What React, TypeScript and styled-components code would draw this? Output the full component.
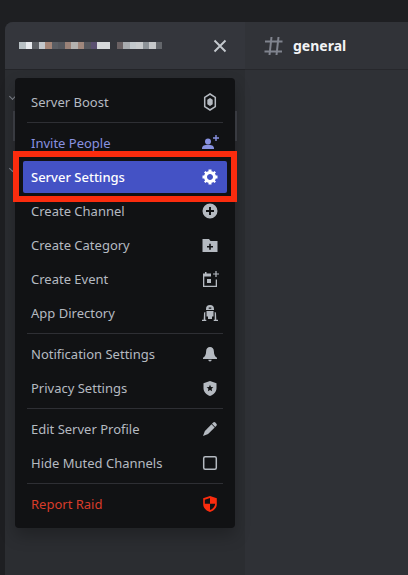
import React from "react"
import styled, { createGlobalStyle } from "styled-components"

const GlobalStyle = createGlobalStyle`
    html, body {
        margin: 0;
        padding: 0;
        height: 100%;
        background: #1e1f22;
    }
    body {
        font-family: "Noto Sans", "Liberation Sans", sans-serif;
    }
`

const BoostIcon = () => (
    <svg width="18" height="18" viewBox="0 0 18 18" fill="none">
        <path d="M9 1 14.300 4.300v9.400L9 17 3.700 13.700V4.300Z" stroke="currentColor" strokeWidth="1.500" />
        <path d="M9 5 11.700 6.800v4.400L9 13 6.300 11.200V6.800Z" fill="currentColor" />
    </svg>
)

const InviteIcon = () => (
    <svg width="18" height="18" viewBox="0 0 18 18" fill="currentColor">
        <circle cx="7" cy="7.500" r="3" />
        <path d="M1 14.500c0-2.800 2.700-3.800 6-3.800s6 1 6 3.800v.5H1Z" />
        <path d="M14.300 1h1.400v2.300H18v1.400h-2.300V7h-1.400V4.700H12V3.300h2.300Z" />
    </svg>
)

const GearIcon = () => (
    <svg width="18" height="18" viewBox="0 0 24 24" fill="currentColor">
        <path fillRule="evenodd" d="M19.738 10H22V14H19.739C19.498 14.931 19.1 15.798 18.565 16.564L20 18L18 20L16.565 18.564C15.797 19.099 14.932 19.498 14 19.738V22H10V19.738C9.069 19.498 8.203 19.099 7.436 18.564L6 20L4 18L5.436 16.564C4.901 15.799 4.502 14.932 4.262 14H2V10H4.262C4.502 9.068 4.9 8.202 5.436 7.436L4 6L6 4L7.436 5.436C8.202 4.9 9.068 4.502 10 4.262V2H14V4.261C14.932 4.502 15.797 4.9 16.565 5.435L18 3.999L20 5.999L18.564 7.436C19.099 8.202 19.498 9.069 19.738 10ZM12 16C14.2091 16 16 14.2091 16 12C16 9.79086 14.2091 8 12 8C9.79086 8 8 9.79086 8 12C8 14.2091 9.79086 16 12 16Z" />
    </svg>
)

const CirclePlusIcon = () => (
    <svg width="18" height="18" viewBox="0 0 18 18" fill="currentColor">
        <path fillRule="evenodd" d="M9 1.500a7.500 7.500 0 1 0 0 15 7.500 7.500 0 0 0 0-15ZM8 5h2v3h3v2h-3v3H8v-3H5V8h3Z" />
    </svg>
)

const FolderPlusIcon = () => (
    <svg width="18" height="18" viewBox="0 0 18 18" fill="currentColor">
        <path fillRule="evenodd" d="M1.500 3h6.500l1.500 2h7v11h-15ZM8.200 7.700v2.300H6v1.500h2.200v2.200h1.600v-2.200H12V10H9.800V7.700Z" />
    </svg>
)

const EventIcon = () => (
    <svg width="18" height="18" viewBox="0 0 18 18" fill="none">
        <path d="M2 3.500h2V2h1.500v1.500H10v3H3.300v9.200h11.400V9.500H16V17H2Z" fill="currentColor" />
        <rect x="6" y="9" width="4" height="4" fill="currentColor" />
        <path d="M14.400 1h1.200v2.400H18v1.200h-2.400V7h-1.200V4.600H12V3.400h2.400Z" fill="currentColor" />
    </svg>
)

const RobotIcon = () => (
    <svg width="18" height="18" viewBox="0 0 18 18" fill="currentColor">
        <path fillRule="evenodd" d="M9 1a4 4 0 0 1 4 4v1H5V5a4 4 0 0 1 4-4Zm-1.300 2.500v1.300h2.600V3.500Z" />
        <path d="M5.500 7h7v5.500h-1.500V15H7v-2.500H5.500Z" />
        <path d="M4.300 8v7.800h1V17H1v-1.200h1.700l.3-6.300C3 8.700 3.500 8 4.300 8ZM13.700 8c.8 0 1.300.7 1.300 1.500l.3 6.300H17V17h-4.300v-1.200h1Z" />
    </svg>
)

const BellIcon = () => (
    <svg width="18" height="18" viewBox="0 0 18 18" fill="currentColor">
        <path d="M9 2c2.400 0 3.900 1.800 3.900 4.400 0 3 1 4.800 3.100 6.400v1.200H2v-1.200c2.100-1.600 3.100-3.400 3.100-6.400C5.100 3.800 6.600 2 9 2Z" />
        <path d="M7.300 14.700h3.400a1.700 1.700 0 0 1-3.400 0Z" />
    </svg>
)

const PrivacyIcon = () => (
    <svg width="18" height="18" viewBox="0 0 18 18" fill="currentColor">
        <path fillRule="evenodd" d="M9 2 15.500 4.300v5C15.500 13 12.500 15.800 9 17 5.500 15.800 2.500 13 2.500 9.300v-5ZM9 5.800l-1 2.200-2.400.2 1.800 1.600-.5 2.400L9 11l2.100 1.200-.5-2.400 1.800-1.600-2.400-.2Z" />
    </svg>
)

const PencilIcon = () => (
    <svg width="18" height="18" viewBox="0 0 18 18" fill="currentColor">
        <path d="M12.200 2.600a1.500 1.500 0 0 1 2.100 0l1.100 1.100a1.500 1.500 0 0 1 0 2.100l-1.200 1.200-3.200-3.200Z" />
        <path d="M10.500 4.300l3.200 3.200-6.600 6.600L2 16l1.900-5.100Z" />
    </svg>
)

const CheckboxIcon = () => (
    <svg width="18" height="18" viewBox="0 0 18 18" fill="none">
        <rect x="2.700" y="2.700" width="12.600" height="12.600" rx="1.500" stroke="currentColor" strokeWidth="1.500" />
    </svg>
)

const RaidIcon = () => (
    <svg width="18" height="18" viewBox="0 0 18 18" fill="currentColor">
        <path fillRule="evenodd" d="M9 1 15.800 3.300v6C15.800 13 12.700 15.800 9 17 5.300 15.800 2.200 13 2.200 9.300v-6ZM9 3 3.800 4.700v4.100H9ZM9 8.800v6.300c2.700-1.100 5-3.200 5.200-6.300Z" />
    </svg>
)

const HashIcon = () => (
    <svg width="22" height="22" viewBox="0 0 22 22" fill="none">
        <path d="M9.500 2 7.500 20M16.500 2 14.500 20M3 6.500h17.500M2.500 16.500h17.500" stroke="currentColor" strokeWidth="2" />
    </svg>
)

type Tone = "normal" | "brand" | "active" | "danger"

type MenuEntry = { label: string; icon: React.ReactNode; tone?: Tone; marked?: boolean }

const menuGroups: MenuEntry[][] = [
    [{ label: "Server Boost", icon: <BoostIcon /> }],
    [
        { label: "Invite People", icon: <InviteIcon />, tone: "brand" },
        { label: "Server Settings", icon: <GearIcon />, tone: "active", marked: true },
        { label: "Create Channel", icon: <CirclePlusIcon /> },
        { label: "Create Category", icon: <FolderPlusIcon /> },
        { label: "Create Event", icon: <EventIcon /> },
        { label: "App Directory", icon: <RobotIcon /> },
    ],
    [
        { label: "Notification Settings", icon: <BellIcon /> },
        { label: "Privacy Settings", icon: <PrivacyIcon /> },
    ],
    [
        { label: "Edit Server Profile", icon: <PencilIcon /> },
        { label: "Hide Muted Channels", icon: <CheckboxIcon /> },
    ],
    [{ label: "Report Raid", icon: <RaidIcon />, tone: "danger" }],
]

// the blurred server name in the header, one mosaic cell per entry
const mosaic = [
    "#b8c0c4", "#e8eaee", "#5c5f64", "#c4c8cc", "#a58678", "#5a5d63", "#54575d",
    "#9a8278", "#b4b2b0", "#a0877c", "#54565c", "#5a4f70", "#d6d8da", "#d6d8da",
    "transparent",
    "#6a6163", "#a9acaf", "#c2c8cc", "#c8cbcd", "#8d9398", "#c6c8ca", "#63666b",
]

export default function App() {
    return (
        <>
            <GlobalStyle />
            <Page>
                <Shell>
                    <Sidebar>
                        <ServerHeader>
                            <BlurredName>
                                {mosaic.map((colour, i) => (
                                    <MosaicCell key={i} $colour={colour} />
                                ))}
                            </BlurredName>
                            <CloseMark>
                                <svg width="18" height="18" viewBox="0 0 18 18" fill="none">
                                    <path d="M3.500 3.500 14.500 14.500M14.500 3.500 3.500 14.500" stroke="currentColor" strokeWidth="1.900" />
                                </svg>
                            </CloseMark>
                        </ServerHeader>
                        <ChannelList>
                            <Chevron />
                            <SelectedChannel />
                            <Chevron />
                        </ChannelList>
                        <Menu>
                            {menuGroups.map((group, g) => (
                                <React.Fragment key={g}>
                                    {g > 0 && <Separator />}
                                    <Group>
                                        {group.map((entry) => (
                                            <Row key={entry.label} $tone={entry.tone ?? "normal"}>
                                                <span>{entry.label}</span>
                                                <IconSlot>{entry.icon}</IconSlot>
                                                {entry.marked && <Annotation />}
                                            </Row>
                                        ))}
                                    </Group>
                                </React.Fragment>
                            ))}
                        </Menu>
                    </Sidebar>
                    <Main>
                        <ChannelHeader>
                            <HashSlot>
                                <HashIcon />
                            </HashSlot>
                            <ChannelName>general</ChannelName>
                        </ChannelHeader>
                    </Main>
                </Shell>
            </Page>
        </>
    )
}

const Page = styled.div`
    width: 408px;
    height: 575px;
    overflow: hidden;
    padding: 22px 0 0 5px;
    box-sizing: border-box;
    background-color: #1e1f22;
`

const Shell = styled.div`
    display: flex;
    height: 100%;
`

const Sidebar = styled.div`
    position: relative;
    width: 240px;
    flex-shrink: 0;
    display: flex;
    flex-direction: column;
    background-color: #2b2d31;
    border-top-left-radius: 8px;
`

const ServerHeader = styled.div`
    height: 48px;
    box-sizing: border-box;
    display: flex;
    align-items: center;
    justify-content: space-between;
    padding: 0 16px 0 14px;
    background-color: #34363c;
    border-top-left-radius: 8px;
    border-bottom: 1px solid #232428;
`

const BlurredName = styled.div`
    display: flex;
    height: 7px;
`

const MosaicCell = styled.div<{ $colour: string }>`
    width: 6.5px;
    height: 100%;
    background-color: ${(p) => p.$colour};
`

const CloseMark = styled.div`
    display: flex;
    color: #c4c9ce;
`

const ChannelList = styled.div`
    display: flex;
    flex-direction: column;
    padding: 24px 8px 0 4px;
`

const Chevron = styled.div`
    width: 4px;
    height: 4px;
    margin-left: 1px;
    border-right: 1px solid #80848e;
    border-bottom: 1px solid #80848e;
    transform: rotate(45deg);
`

const SelectedChannel = styled.div`
    height: 30px;
    margin: 12px 0 25px 4px;
    background-color: #404249;
`

const Menu = styled.div`
    position: absolute;
    left: 10px;
    top: 56px;
    width: 220px;
    box-sizing: border-box;
    padding: 8px;
    background-color: #111214;
    border-radius: 4px;
    box-shadow: 0 8px 16px rgba(0, 0, 0, 0.24);
`

const Group = styled.div`
    display: flex;
    flex-direction: column;
    gap: 2px;
`

const Separator = styled.div`
    height: 1px;
    margin: 4px;
    background-color: #2e2f34;
`

const toneStyles: Record<Tone, string> = {
    normal: "color: #b5bac1;",
    brand: "color: #8891e0;",
    active: "color: #ffffff; background-color: #4452c5; font-weight: 500;",
    danger: "color: #d83c2a;",
}

const Row = styled.div<{ $tone: Tone }>`
    position: relative;
    height: 32px;
    box-sizing: border-box;
    display: flex;
    align-items: center;
    justify-content: space-between;
    padding: 0 8px;
    border-radius: 2px;
    font-size: 13px;
    font-weight: 400;
    ${(p) => toneStyles[p.$tone]}
    svg {
        color: ${(p) => (p.$tone === "danger" ? "#fb2c0e" : "inherit")};
    }
`

const IconSlot = styled.div`
    display: flex;
`

const Annotation = styled.div`
    position: absolute;
    left: -10px;
    top: -10px;
    width: 224px;
    height: 51px;
    box-sizing: border-box;
    border: 6px solid #fb2c0e;
    pointer-events: none;
`

const Main = styled.div`
    flex: 1;
    background-color: #2f3136;
`

const ChannelHeader = styled.div`
    height: 48px;
    box-sizing: border-box;
    display: flex;
    align-items: center;
    padding-left: 17px;
    gap: 9px;
    background-color: #313338;
    border-bottom: 1px solid #27282c;
`

const HashSlot = styled.div`
    display: flex;
    color: #80848e;
`

const ChannelName = styled.div`
    color: #f2f3f5;
    font-size: 14px;
    font-weight: 700;
`
